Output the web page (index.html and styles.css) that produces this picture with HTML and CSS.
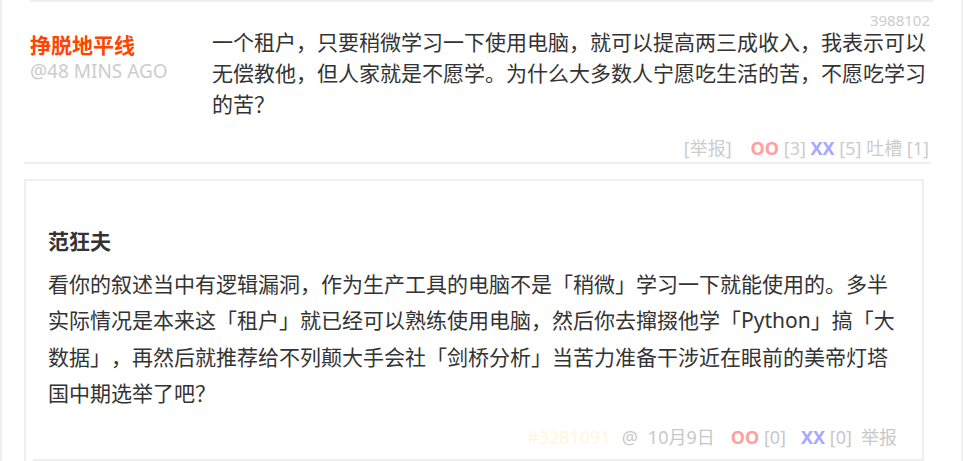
FILE: index.html
```html
<html>
  <head>
    <title>comments</title>
    <link rel="stylesheet" href="styles.css">
  </head>
  <body>
    <div class="page">
      <div class="prev-end"></div>

      <div class="comment">
        <div class="comment-id">3988102</div>
        <div class="comment-main">
          <div class="author">
            <div class="author-name">挣脱地平线</div>
            <div class="author-time">@48 MINS AGO</div>
          </div>
          <div class="comment-text">一个租户，只要稍微学习一下使用电脑，就可以提高两三成收入，我表示可以无偿教他，但人家就是不愿学。为什么大多数人宁愿吃生活的苦，不愿吃学习的苦？</div>
        </div>
        <div class="comment-actions">
          <span>[举报]</span><span class="oo act-oo">OO</span> [3] <span class="xx">XX</span> [5] 吐槽 [1]
        </div>
      </div>

      <div class="reply">
        <div class="reply-name">范狂夫</div>
        <div class="reply-text">看你的叙述当中有逻辑漏洞，作为生产工具的电脑不是「稍微」学习一下就能使用的。多半实际情况是本来这「租户」就已经可以熟练使用电脑，然后你去撺掇他学「Python」搞「大数据」，再然后就推荐给不列颠大手会社「剑桥分析」当苦力准备干涉近在眼前的美帝灯塔国中期选举了吧？</div>
        <div class="reply-foot">
          <span class="foot-id">#3281091</span><span class="foot-at">@</span><span class="foot-date">10月9日</span><span class="oo foot-oo">OO</span> [0]<span class="xx foot-xx">XX</span> [0]<span class="foot-report">举报</span>
        </div>
      </div>
    </div>
  </body>
</html>
```

FILE: styles.css
```css
body {
  margin: 0;
  background: #fff;
  font-family: "Noto Sans", "Noto Sans CJK SC", sans-serif;
  text-spacing-trim: space-all;
}
.page {
  height: 461px;
  overflow: hidden;
  border-left: 2px solid #efefef;
  border-right: 2px solid #efefef;
}
.prev-end {
  height: 2px;
  margin: 0 28px;
  background: #efefef;
}

/* top comment */
.comment {
  margin: 0 30px 0 22px;
  border-bottom: 2px solid #efefef;
}
.comment-id {
  margin-top: 11px;
  padding-right: 1px;
  text-align: right;
  font-size: 15px;
  line-height: 14px;
  color: #ccc;
}
.comment-main {
  display: flex;
}
.author {
  width: 188px;
  flex-shrink: 0;
  padding-left: 6px;
  box-sizing: border-box;
}
.author-name {
  padding-top: 4px;
  font-size: 21px;
  line-height: 28px;
  font-weight: bold;
  color: #ff4400;
}
.author-time {
  font-size: 19px;
  line-height: 24px;
  color: #ccc;
}
.comment-text {
  flex: 1;
  font-size: 21px;
  line-height: 31px;
  color: #333;
}
.comment-actions {
  margin-top: 16.5px;
  padding: 0 2px 3.5px 0;
  text-align: right;
  font-size: 18px;
  line-height: 22px;
  color: #ccc;
}
.oo {
  font-weight: bold;
  color: #ffa0a0;
}
.xx {
  font-weight: bold;
  color: #a8a8ff;
}
.act-oo {
  margin-left: 19px;
}

/* reply card */
.reply {
  margin: 15px 37px 0 22px;
  padding: 41.5px 22px 0 22px;
  border: 2px solid #efefef;
  border-bottom: none;
}
.reply-name {
  margin-bottom: 7px;
  font-size: 21px;
  line-height: 36px;
  font-weight: bold;
  color: #333;
}
.reply-text {
  font-size: 21px;
  line-height: 36.5px;
  color: #333;
}
.reply-foot {
  margin: 13.5px -22px 0 -15px;
  padding: 0 25px 10px 0;
  border-bottom: 2px solid #efefef;
  text-align: right;
  font-size: 18px;
  line-height: 24px;
  color: #c8c8c8;
}
.foot-id {
  color: #fdf8dc;
}
.foot-at {
  margin-left: 11px;
}
.foot-date {
  margin-left: 10px;
}
.foot-oo {
  margin-left: 16px;
}
.foot-xx {
  margin-left: 15px;
}
.foot-report {
  margin-left: 9px;
}
```
